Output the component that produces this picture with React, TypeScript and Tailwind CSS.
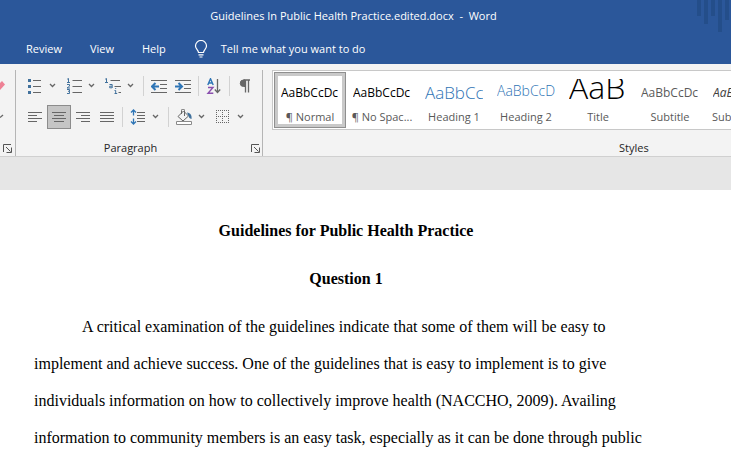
import type { ReactNode } from "react";
import clsx from "clsx";

const tabs = ["Review", "View", "Help"];

const styleItems = [
  { label: "¶ Normal", sample: "AaBbCcDc", look: "text-xs leading-7 text-black", selected: true },
  { label: "¶ No Spac...", sample: "AaBbCcDc", look: "text-xs leading-7 text-black" },
  { label: "Heading 1", sample: "AaBbCc", look: "text-[17px] leading-7 font-light text-[#2e74b5]" },
  { label: "Heading 2", sample: "AaBbCcD", look: "text-sm leading-6 font-light text-[#2e74b5]" },
  { label: "Title", sample: "AaB", look: "text-[32px] leading-4 font-light text-black" },
  { label: "Subtitle", sample: "AaBbCcDc", look: "text-xs leading-7 text-[#5a5a5a]" },
  { label: "Subtle Em...", sample: "AaBbCcDc", look: "text-xs leading-7 italic text-[#404040]" },
];

function Icon({ children }: { children: ReactNode }) {
  return (
    <svg width="16" height="16" viewBox="0 0 16 16" fill="none" stroke="#666" aria-hidden="true">
      {children}
    </svg>
  );
}

function Chevron() {
  return (
    <svg width="7" height="5" viewBox="0 0 7 5" fill="none" stroke="#666" strokeWidth="1.3" aria-hidden="true">
      <path d="M1 1l2.5 2.5L6 1" />
    </svg>
  );
}

function ToolButton({ label, active, children }: { label: string; active?: boolean; children: ReactNode }) {
  return (
    <button
      type="button"
      aria-label={label}
      aria-pressed={active}
      className={clsx(
        "flex h-6 w-6 shrink-0 items-center justify-center",
        active ? "border border-[#8c8c8c] bg-[#c5c5c5]" : "hover:bg-[#d5d5d5]"
      )}
    >
      {children}
    </button>
  );
}

function SplitButton({ label, children }: { label: string; children: ReactNode }) {
  return (
    <div className="flex items-center">
      <ToolButton label={label}>{children}</ToolButton>
      <button type="button" aria-label={`${label} options`} className="flex h-6 w-[15px] items-center pl-0.5">
        <Chevron />
      </button>
    </div>
  );
}

function Separator() {
  return <div className="mx-[3px] h-5 w-px bg-[#d2d2d2]" />;
}

function Launcher({ label }: { label: string }) {
  return (
    <button type="button" aria-label={label} className="flex h-4 items-center">
      <svg width="9" height="9" viewBox="0 0 9 9" fill="none" stroke="#555" aria-hidden="true">
        <path d="M.5 8V.5H8M3 3l4.5 4.5M8.500 3.500v5h-5" />
      </svg>
    </button>
  );
}

function FontGroup() {
  return (
    <div className="flex w-4 shrink-0 flex-col border-r border-[#b5b5b5]">
      <div className="flex h-[31px] items-center">
        <svg width="6" height="14" viewBox="0 0 6 14" aria-hidden="true">
          <path d="M0 4l2-2 3 3.500L0 11z" fill="#ee8195" />
        </svg>
      </div>
      <div className="flex h-[31px] items-center">
        <svg width="4" height="5" viewBox="0 0 4 5" fill="none" stroke="#666" strokeWidth="1.3" aria-hidden="true">
          <path d="M0 3.500L3 1" />
        </svg>
      </div>
      <div className="mt-2 flex justify-end pr-[3px]">
        <Launcher label="Font settings" />
      </div>
    </div>
  );
}

function ParagraphGroup() {
  return (
    <div className="flex w-[247px] shrink-0 flex-col border-r border-[#b5b5b5]">
      <div className="flex h-[31px] items-center pl-[7px]">
        <SplitButton label="Bullets">
          <Icon>
            <path d="M6 2.500h8M6 8.500h8M6 14.500h8" />
            <path d="M1 1h3v3H1zM1 7h3v3H1zM1 13h3v3H1z" fill="#41719c" stroke="none" />
          </Icon>
        </SplitButton>
        <SplitButton label="Numbering">
          <Icon>
            <path d="M6.500 2.500H16M6.500 8.500H16M6.500 14.500H16" />
            <path
              d="M1.200 1.200l1.300-.7v4M1 4.500h3M1 6.500h2.500v1.700L1 10h3M1 11.500h2.500v1.800H2M3.500 13.300v2.200H1"
              stroke="#41719c"
            />
          </Icon>
        </SplitButton>
        <SplitButton label="Multilevel list">
          <Icon>
            <path d="M5.500 2.500H15M9.500 8.500H16M13.500 14.500H16" />
            <path
              d="M.2 1.200l1.300-.7v4M0 4.500h3M4.500 6.500h2.700v3.500M7 8.200H4.700v1.600H7M9.500 12.500h1.200V16M9.500 15.500h2.700M10.200 10.500h1"
              stroke="#41719c"
            />
          </Icon>
        </SplitButton>
        <Separator />
        <ToolButton label="Decrease indent">
          <Icon>
            <path d="M0 2.500h16M9 6.500h7M9 10.500h7M0 14.500h16" />
            <path d="M8 8.500H1.500M4.500 5L1 8.500 4.500 12" stroke="#2e75b6" strokeWidth="2" />
          </Icon>
        </ToolButton>
        <ToolButton label="Increase indent">
          <Icon>
            <path d="M0 2.500h16M9 6.500h7M9 10.500h7M0 14.500h16" />
            <path d="M0 8.500h6.500M3.500 5L7 8.500 3.500 12" stroke="#2e75b6" strokeWidth="2" />
          </Icon>
        </ToolButton>
        <Separator />
        <ToolButton label="Sort">
          <Icon>
            <path d="M1.800 7L4.500.700 7.200 7M2.700 5h3.600" stroke="#2e75b6" strokeWidth="1.400" />
            <path d="M2 9.500h5L2 15.300h5.300" stroke="#8a4fae" strokeWidth="1.400" />
            <path d="M11.500 1v13M8.800 11.500l2.700 3 2.700-3" strokeWidth="1.300" />
          </Icon>
        </ToolButton>
        <Separator />
        <ToolButton label="Show paragraph marks">
          <Icon>
            <path d="M6.500 2H13M8.500 2v12.500M11.500 2v12.500" strokeWidth="1.300" />
            <path d="M8 8.500H6.500a3.200 3.200 0 010-6.500H8z" fill="#666" />
          </Icon>
        </ToolButton>
      </div>
      <div className="flex h-[31px] items-center pl-[7px]">
        <ToolButton label="Align left">
          <Icon>
            <path d="M1 3.500h14M1 6.500h9M1 9.500h14M1 12.500h9" />
          </Icon>
        </ToolButton>
        <ToolButton label="Center" active>
          <Icon>
            <path d="M1 3.500h14M3 6.500h10M1 9.500h14M3 12.500h10" />
          </Icon>
        </ToolButton>
        <ToolButton label="Align right">
          <Icon>
            <path d="M1 3.500h14M6 6.500h9M1 9.500h14M6 12.500h9" />
          </Icon>
        </ToolButton>
        <ToolButton label="Justify">
          <Icon>
            <path d="M1 3.500h14M1 6.500h14M1 9.500h14M1 12.500h14" />
          </Icon>
        </ToolButton>
        <Separator />
        <SplitButton label="Line spacing">
          <Icon>
            <path d="M7 3.500h8M7 6.500h8M7 9.500h8M7 12.500h8" />
            <path
              d="M3.500 1v5.500M1 3.500L3.500 1 6 3.500M3.500 9.500V15M1 12.500L3.500 15 6 12.500"
              stroke="#2e75b6"
              strokeWidth="1.300"
            />
          </Icon>
        </SplitButton>
        <Separator />
        <SplitButton label="Shading">
          <Icon>
            <path d="M2 7.500L7.500 2l5 5L7 12zM5.500 5V1.500a1.500 1.500 0 013 0V7" />
            <path d="M11 3.500c3.500.300 5 3 4.500 6.500-2-.300-2.500-1.500-3-3z" fill="#41719c" stroke="none" />
            <path d="M.5 12.500h15v3H.5z" fill="#fff" stroke="#8a8a8a" />
          </Icon>
        </SplitButton>
        <SplitButton label="Borders">
          <Icon>
            <path d="M1 1.500h13M1 7.500h13M1 13.500h13M1.500 1v13M7.500 1v13M13.500 1v13" strokeDasharray="1 1" />
          </Icon>
        </SplitButton>
      </div>
      <div className="mt-2 flex items-center pr-[2px] text-[11px] leading-4 text-[#262626]">
        <span className="flex-1 pr-1.5 text-center">Paragraph</span>
        <Launcher label="Paragraph settings" />
      </div>
    </div>
  );
}

function StylesGroup() {
  return (
    <div className="flex min-w-0 flex-1 flex-col overflow-hidden pl-[9px]">
      <div className="flex border border-r-0 border-[#c8c8c8] bg-white p-px">
        {styleItems.map((item) => (
          <button
            type="button"
            key={item.label}
            className={clsx(
              "flex h-14 w-[72px] shrink-0 flex-col items-center pt-[7px]",
              item.selected && "shadow-[inset_0_0_0_1px_#8f8f8f,inset_0_0_0_4px_#c9c9c9]"
            )}
          >
            <span className={clsx("block h-7 w-[58px] overflow-hidden text-left whitespace-nowrap", item.look)}>
              {item.sample}
            </span>
            <span className="mt-0.5 text-[11px] leading-4 whitespace-nowrap text-[#595959]">{item.label}</span>
          </button>
        ))}
      </div>
      <div className="mt-[10px] pl-[347px] text-[11px] leading-4 text-[#262626]">Styles</div>
    </div>
  );
}

export default function App() {
  return (
    <div className="flex h-screen flex-col overflow-hidden bg-[#e6e6e6] font-['Open_Sans',sans-serif]">
      <header className="relative shrink-0 bg-[#2b579a] text-[11px] text-white">
        <svg width="34" height="32" viewBox="0 0 34 32" className="absolute top-0 right-0" fill="#244e8a" aria-hidden="true">
          <path d="M0 0h4v16H0zM7 0h4v24H7zM14 0h4v16h-4zM21 0h4v32h-4zM28 0h4v20h-4z" />
        </svg>
        <div className="flex h-8 items-center justify-center pr-6 whitespace-pre">
          Guidelines In Public Health Practice.edited.docx  -  Word
        </div>
        <nav className="flex h-8 items-center gap-7 pt-0.5 pl-[26px]">
          {tabs.map((tab) => (
            <button type="button" key={tab}>
              {tab}
            </button>
          ))}
          <button type="button" className="flex items-center gap-[13px]">
            <svg width="14" height="18" viewBox="0 0 14 18" fill="none" stroke="#fff" strokeWidth="1.200" aria-hidden="true">
              <path d="M4.500 12.500c0-2.500-3-3.500-3-6.500a5.500 5.500 0 0111 0c0 3-3 4-3 6.500zM4.500 14.800h5M5.500 17h3" />
            </svg>
            Tell me what you want to do
          </button>
        </nav>
      </header>

      <section className="flex h-[93px] shrink-0 border-b border-[#d0d0d0] bg-[#f3f3f3] pt-[6px]">
        <FontGroup />
        <ParagraphGroup />
        <StylesGroup />
      </section>

      <main className="mt-[33px] flex-1 overflow-hidden bg-white pt-[22px] pl-[34px] font-['Liberation_Serif',serif] text-base leading-[37px] text-black">
        <article className="max-w-[624px]">
          <h1 className="mb-[11px] text-center font-bold">Guidelines for Public Health Practice</h1>
          <h2 className="mb-[11px] text-center font-bold">Question 1</h2>
          <p className="indent-12">
            A critical examination of the guidelines indicate that some of them will be easy to implement and achieve
            success. One of the guidelines that is easy to implement is to give individuals information on how to
            collectively improve health (NACCHO, 2009). Availing information to community members is an easy task,
            especially as it can be done through public
          </p>
        </article>
      </main>
    </div>
  );
}
